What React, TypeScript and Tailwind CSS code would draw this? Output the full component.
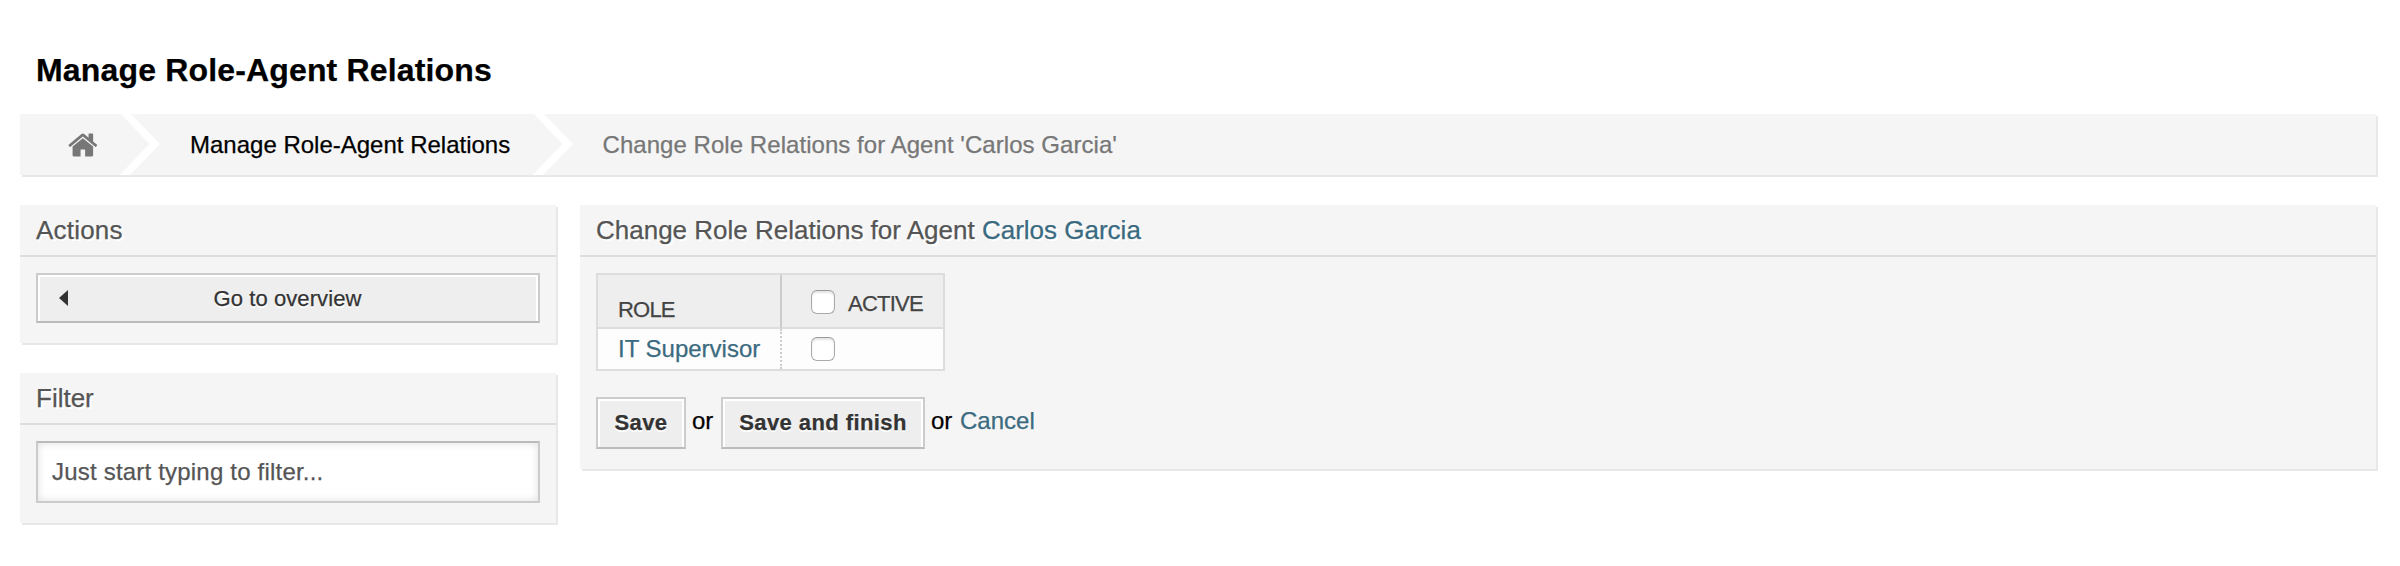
import React from 'react';

function HomeIcon() {
  return (
    <svg viewBox="0 0 1664 1792" className="h-[32px] w-[29.7px] shrink-0 fill-[#777]">
      <path d="M1408 992v480q0 26-19 45t-45 19h-384v-384h-256v384h-384q-26 0-45-19t-19-45v-480q0-1 .5-3t.5-3l575-474 575 474q1 2 1 6zm223-69l-62 74q-8 9-21 11h-3q-13 0-21-7l-692-577-692 577q-12 8-24 7-13-2-21-11l-62-74q-8-10-7-23.5t11-21.5l719-599q32-26 76-26t76 26l244 204v-195q0-14 9-23t23-9h192q14 0 23 9t9 23v408l219 182q10 8 11 21.5t-7 23.5z" />
    </svg>
  );
}

function Chevron() {
  return (
    <svg viewBox="0 0 41 61" className="h-[61px] w-[41px] shrink-0 fill-white">
      <path d="M0 -1H10L40 30L10 61H-0.5L29.5 30Z" />
    </svg>
  );
}

const boxShadow = 'bg-[#f5f5f5] shadow-[2px_2px_0_#e8e8e8]';
const buttonStyle =
  'border-2 border-[#ccc] border-b-[#bbb] bg-[#eee] text-[22px] text-[#333] shadow-[inset_2px_2px_0_#fff,inset_-2px_0_0_#fff] [text-shadow:0_2px_0_#fff]';
const submitStyle = 'h-[52px] pb-[3px] font-bold tracking-[0.42px]';

function Widget({ title, className, children }: { title: React.ReactNode; className: string; children: React.ReactNode }) {
  return (
    <section className={`${boxShadow} ${className}`}>
      <h2 className="h-[52px] border-b-2 border-[#ddd] px-4 text-[26px] leading-[50px] text-[#555] [text-shadow:2px_2px_0_#fff]">
        {title}
      </h2>
      <div className="px-4 pt-4">{children}</div>
    </section>
  );
}

function Checkbox() {
  return (
    <input
      type="checkbox"
      className="block h-6 w-6 shrink-0 appearance-none rounded-[6px] border border-[#aaa] border-t-[#999] bg-white shadow-[inset_0_2px_2px_#e4e4e4]"
    />
  );
}

export default function App() {
  return (
    <main className="flex h-[566px] w-[2400px] flex-col bg-white px-5 font-['Liberation_Sans',Arial,sans-serif] text-[24px] text-black [-webkit-text-stroke:0.25px]">
      <h1 className="h-[114px] px-4 pt-[50px] text-[32px] leading-[40px] font-bold">
        <span className="tracking-[0.16px]">Manage Role-Agent Relations</span>
      </h1>
      <nav className={`mr-1 flex h-[61px] items-center leading-[61px] ${boxShadow}`}>
        <div className="w-[99.5px] pl-[48px]">
          <HomeIcon />
        </div>
        <Chevron />
        <a className="w-[372px] pl-[29.5px]">Manage Role-Agent Relations</a>
        <Chevron />
        <span className="pl-[29px] tracking-[0.05px] text-[#777]">Change Role Relations for Agent 'Carlos Garcia'</span>
      </nav>
      <div className="mt-[30px] mr-1 flex items-start gap-6">
        <aside className="flex w-[536px] flex-col gap-[30px]">
          <Widget title={<span className="tracking-[0.2px]">Actions</span>} className="h-[138px]">
            <button className={`flex h-[50px] w-full items-center pl-[21px] ${buttonStyle}`}>
              <svg viewBox="0 0 9 16" className="h-4 w-[9px] fill-[#333]">
                <path d="M9 0V16L0 8Z" />
              </svg>
              <span className="flex-1 pr-[31px] text-center tracking-[0.08px]">Go to overview</span>
            </button>
          </Widget>
          <Widget title="Filter" className="h-[150px]">
            <input
              type="text"
              placeholder="Just start typing to filter..."
              className="block h-[62px] w-full border-2 border-[#ccc] border-t-[#bbb] bg-white px-[14px] text-[24px] tracking-[0.2px] shadow-[inset_0_0_8px_#e0e0e0] placeholder:text-[#555]"
            />
          </Widget>
        </aside>
        <Widget
          className="h-[264px] flex-1"
          title={
            <>
              Change Role Relations for Agent <a className="text-[#3a6b80]">Carlos Garcia</a>
            </>
          }
        >
          <div className="grid h-[98px] w-[349px] grid-cols-[184px_161px] grid-rows-[54px_40px] border-2 border-[#ddd] bg-[#fdfdfd]">
            <div className="border-r-2 border-b-2 border-[#ddd] border-r-[#ccc] bg-[#eee] pl-5 text-[22px] leading-[70px] tracking-[-0.8px] text-[#444]">
              ROLE
            </div>
            <div className="flex items-center border-b-2 border-[#ddd] bg-[#eee] pt-[2px] pl-[29px] text-[22px] text-[#444]">
              <Checkbox />
              <span className="pt-[2px] pl-[13px] tracking-[-0.75px]">ACTIVE</span>
            </div>
            <div className="border-r-2 border-dotted border-[#ccc] pl-5 leading-[40px] text-[#3a6b80]">IT Supervisor</div>
            <div className="flex items-center pl-[29px]">
              <Checkbox />
            </div>
          </div>
          <div className="mt-[26px] flex leading-[48px]">
            <button className={`w-[90px] ${submitStyle} ${buttonStyle}`}>Save</button>
            <span className="w-[35px] pl-[6px]">or</span>
            <button className={`w-[204px] ${submitStyle} ${buttonStyle}`}>Save and finish</button>
            <span className="w-[35px] pl-[6px]">or</span>
            <a className="text-[#3a6b80]">Cancel</a>
          </div>
        </Widget>
      </div>
    </main>
  );
}
